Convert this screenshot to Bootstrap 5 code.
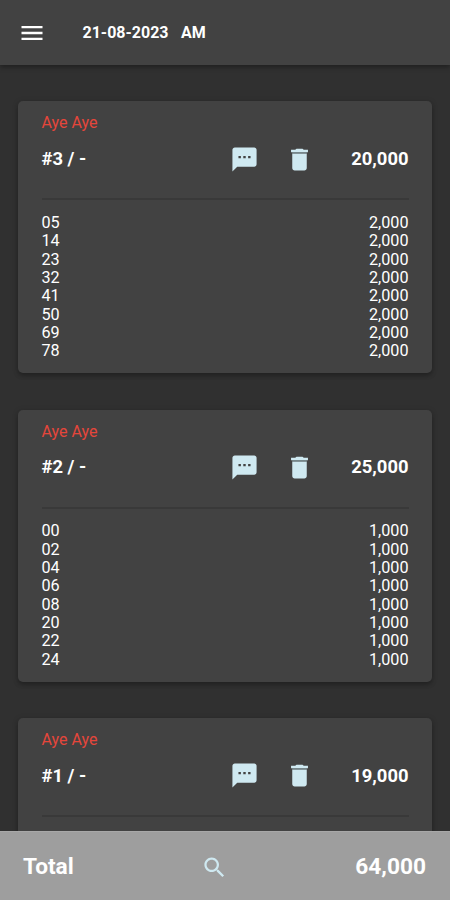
<!DOCTYPE html>
<html lang="en" data-bs-theme="dark">
<head>
<meta charset="utf-8">
<meta name="viewport" content="width=device-width, initial-scale=1">
<title>21-08-2023 AM</title>
<link href="https://cdn.jsdelivr.net/npm/bootstrap@5.3.0/dist/css/bootstrap.min.css" rel="stylesheet">
<style>
body{background:#303030;color:#fff;font-family:Roboto,"Liberation Sans",sans-serif;font-size:16.2px;line-height:18.35px}
.topbar{height:65px;padding:0 22px 0 18.5px;background:#424242;box-shadow:0 2px 5px rgba(0,0,0,.38);z-index:2}
.topbar h1{font-size:16px;line-height:20px;font-weight:700;margin-left:36.5px;padding-top:1px;word-spacing:8.5px}
.menu-icon{width:28px;height:28px;margin-left:-.5px}
.slips{padding:36.3px 18px 0;gap:36.3px}
.slip{height:272px;flex:none;background:#424242;border:0;border-radius:5px;padding:12px 23.5px 0;box-shadow:0 3px 4px rgba(0,0,0,.22),0 1px 6px rgba(0,0,0,.15)}
.owner{color:#e5463b;font-size:16px;line-height:19px}
.slip-head{height:54px;font-size:18.4px;font-weight:700}
.slip-head .tag{width:188px}
.slip-head svg,.total-bar svg{color:#cfe9f1}
.slip-head svg{width:29px;height:29px}
.bin{margin-left:26px}
.rule{height:2px;background:#393939;margin:12px 0 13.6px}
.total-bar{height:69px;background:#9e9e9e;padding:3px 24px 0 23px;font-size:22.7px;font-weight:700;box-shadow:inset 0 1px #a8a8a8;z-index:2}
.total-bar svg{width:27px;height:27px}
.total-bar .sum{width:198px}
.total-bar .label{width:178px}
</style>
</head>
<body class="vh-100 overflow-hidden d-flex flex-column">
<svg class="d-none">
<symbol id="chat" viewBox="0 0 24 24"><path fill="currentColor" d="M20 2H4c-1.1 0-1.99.9-1.99 2L2 22l4-4h14c1.1 0 2-.9 2-2V4c0-1.1-.9-2-2-2zM9 11H7V9h2v2zm4 0h-2V9h2v2zm4 0h-2V9h2v2z"/></symbol>
<symbol id="bin" viewBox="0 0 24 24"><path fill="currentColor" d="M6 19c0 1.1.9 2 2 2h8c1.1 0 2-.9 2-2V7H6v12zM19 4h-3.5l-1-1h-5l-1 1H5v2h14V4z"/><path fill="#7d9096" d="M6 6h12v1H6z"/></symbol>
</svg>
<header class="topbar navbar flex-nowrap justify-content-start flex-shrink-0 position-relative">
<svg class="menu-icon" viewBox="0 0 24 24" fill="#fff"><path d="M3 18h18v-2H3v2zm0-5h18v-2H3v2zm0-7v2h18V6H3z"/></svg>
<h1 class="mb-0">21-08-2023 AM</h1>
</header>
<main class="slips flex-fill overflow-hidden d-flex flex-column" id="slips"></main>
<footer class="total-bar d-flex align-items-center flex-shrink-0 position-relative">
<span class="label">Total</span>
<svg viewBox="0 0 24 24" fill="currentColor"><path d="M15.5 14h-.79l-.28-.27C15.41 12.59 16 11.11 16 9.5 16 5.91 13.09 3 9.5 3S3 5.91 3 9.5 5.91 16 9.5 16c1.61 0 3.09-.59 4.23-1.57l.27.28v.79l5 4.99L20.49 19l-4.99-5zm-6 0C7.01 14 5 11.99 5 9.5S7.01 5 9.5 5 14 7.01 14 9.5 11.99 14 9.5 14z"/></svg>
<span class="sum text-end">64,000</span>
</footer>
<script src="https://cdn.jsdelivr.net/npm/bootstrap@5.3.0/dist/js/bootstrap.bundle.min.js"></script>
<script>
const slips = [
  {id: 3, total: '20,000', each: '2,000', numbers: ['05','14','23','32','41','50','69','78']},
  {id: 2, total: '25,000', each: '1,000', numbers: ['00','02','04','06','08','20','22','24']},
  {id: 1, total: '19,000', each: '', numbers: []}
];
document.getElementById('slips').innerHTML = slips.map(s => `
  <section class="card slip">
    <div class="owner">Aye Aye</div>
    <div class="slip-head d-flex align-items-center">
      <span class="tag">#${s.id} / -</span>
      <svg><use href="#chat"/></svg>
      <svg class="bin"><use href="#bin"/></svg>
      <span class="ms-auto">${s.total}</span>
    </div>
    <div class="rule"></div>
    ${s.numbers.map(n => `<div class="d-flex justify-content-between"><span>${n}</span><span>${s.each}</span></div>`).join('')}
  </section>`).join('');
</script>
</body>
</html>
